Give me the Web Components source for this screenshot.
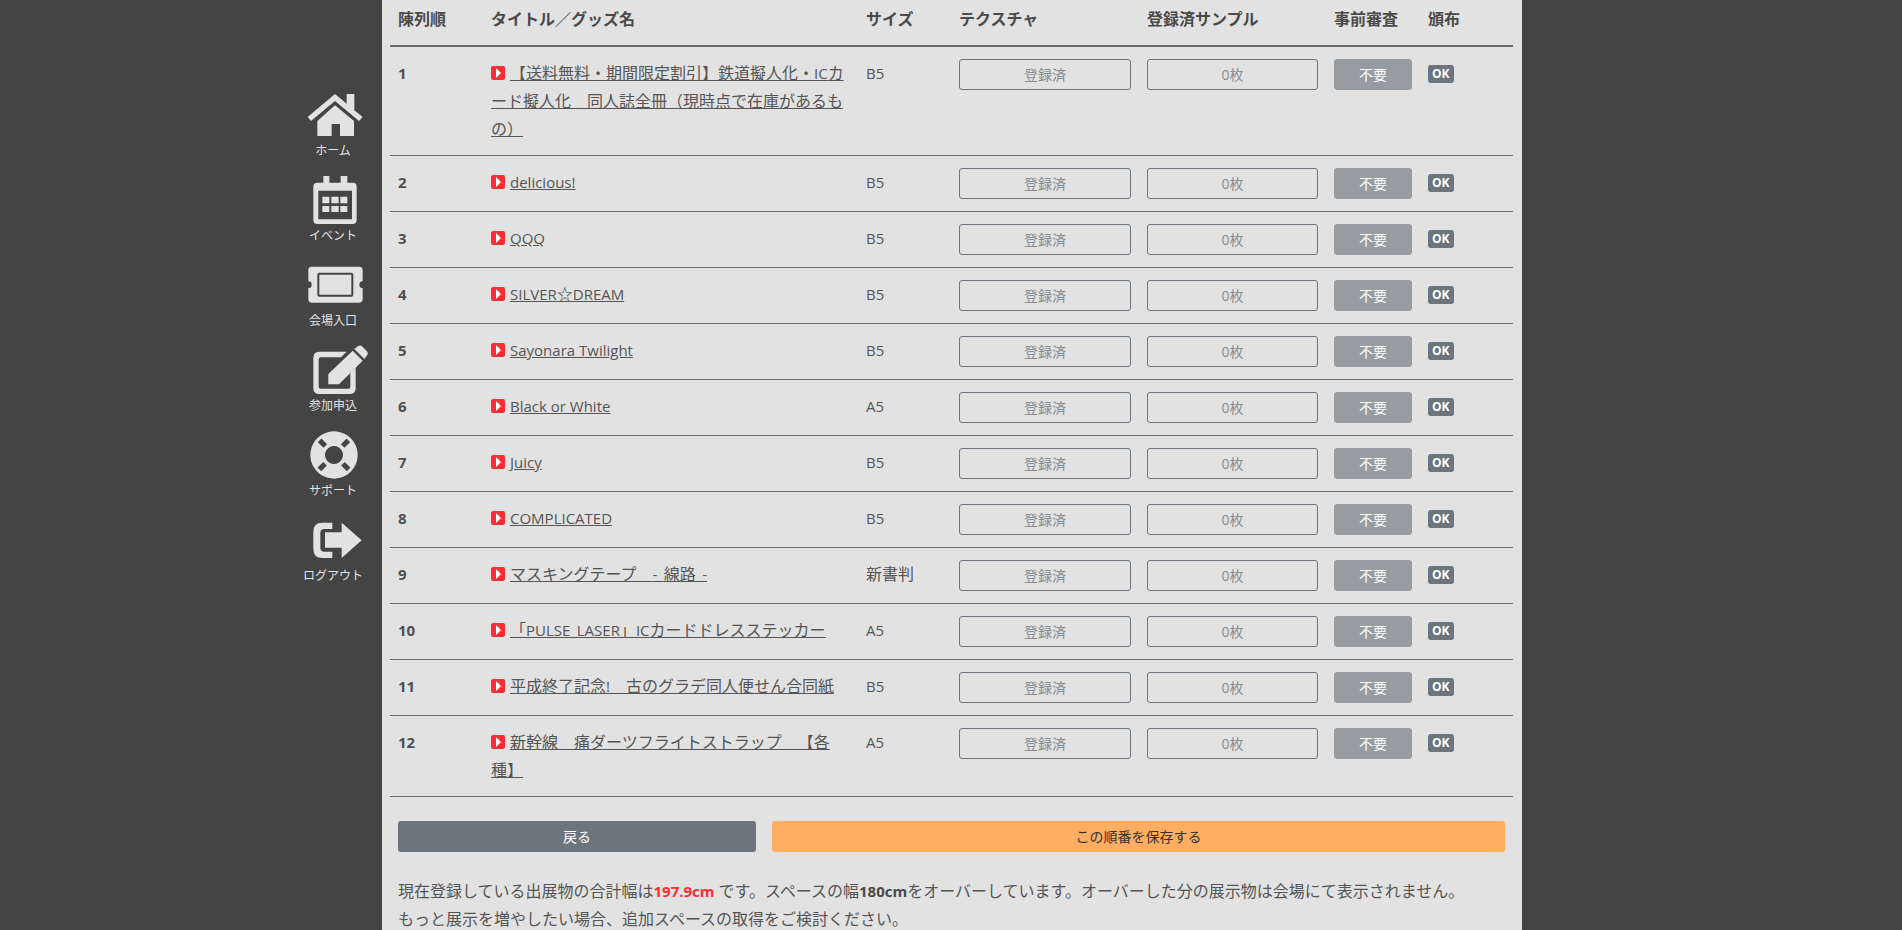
<!DOCTYPE html>
<html lang="ja">
<head>
<meta charset="utf-8">
<title>陳列順</title>
<style>
    html, body { margin: 0; height: 930px; overflow: hidden; background: #444; }
    body { font: 16px/28px "Open Sans", "Noto Sans CJK JP", sans-serif; color: #555; text-spacing-trim: space-all; }
    svg { fill: #e2e2e2; display: block; }
</style>
</head>
<body>
<shop-page>
    <side-nav slot="side">
        <nav-item>
            <svg viewBox="0 -21 276 207" width="92" height="69"><path d="M135 42l35 29V42h23v49l25 20-11 12-72-60-72 60-10-12z"/><path d="M135 76l57 47v45h-42v-36h-25v36H82v-45z"/></svg>
            <span slot="label">ホーム</span>
        </nav-item>
        <nav-item>
            <svg viewBox="0 234 276 207" width="92" height="69"><path fill-rule="evenodd" d="M100 288h18v20h34v-20h20v20h16q12 0 12 12v100q0 12-12 12H82q-12 0-12-12V320q0-12 12-12h18zM85 332v86h101v-86zM97 350h21v20H97zM124 350h22v20h-22zM151 350h21v20h-21zM97 378h21v18H97zM124 378h22v18h-22zM151 378h21v18h-21z"/></svg>
            <span slot="label">イベント</span>
        </nav-item>
        <nav-item>
            <svg viewBox="0 489 276 207" width="92" height="69"><path fill-rule="evenodd" d="M65 560H208q10 0 10 10v34a10 10 0 0 0 0 20v34q0 10-10 10H65q-10 0-10-10v-34a10 10 0 0 0 0-20v-34q0-10 10-10zM88 578q-6 0-6 6v60q0 6 6 6h96q6 0 6-6v-60q0-6-6-6zM88 584h96v60H88z"/></svg>
            <span slot="label">会場入口</span>
        </nav-item>
        <nav-item>
            <svg viewBox="0 -6 276 207" width="92" height="69"><path d="M88 65h82l-17 17H92q-6 0-6 6v82q0 6 6 6h83q6 0 6-6v-42l16-16v62q0 18-18 18H88q-18 0-18-18V83q0-18 18-18z"/><path d="M115 163v-31l73-70 30 30-71 71z"/><path d="M193 57l12-9q6-4 11 1l15 15q5 6 1 11l-9 12z"/></svg>
            <span slot="label">参加申込</span>
        </nav-item>
        <nav-item>
            <svg viewBox="0 249 276 207" width="92" height="69"><path fill-rule="evenodd" d="M132 304a71 71 0 1 0 .01 0zM132 348a27 27 0 1 1-.01 0z"/><g fill="#444"><rect x="85" y="332" width="24" height="15" transform="rotate(45 97 340)"/><rect x="155" y="332" width="24" height="15" transform="rotate(-45 167 340)"/><rect x="85" y="402" width="24" height="15" transform="rotate(-45 97 410)"/><rect x="155" y="402" width="24" height="15" transform="rotate(45 167 410)"/></g></svg>
            <span slot="label">サポート</span>
        </nav-item>
        <nav-item>
            <svg viewBox="0 504 276 207" width="92" height="69"><path d="M127 578H97q-27 0-27 27v52q0 27 27 27h30v-19h-24q-12 0-12-12v-44q0-12 12-12h24z"/><path d="M155 578l60 53-60 53v-31h-50v-46h50z"/></svg>
            <span slot="label">ログアウト</span>
        </nav-item>
    </side-nav>

    <list-head></list-head>
    <exhibit-row no="1" size="B5">【送料無料・期間限定割引】鉄道擬人化・<span class="lat">IC</span>カード擬人化　同人誌全冊（現時点で在庫があるもの）</exhibit-row>
    <exhibit-row no="2" size="B5"><span class="lat">delicious!</span></exhibit-row>
    <exhibit-row no="3" size="B5"><span class="lat">QQQ</span></exhibit-row>
    <exhibit-row no="4" size="B5"><span class="lat">SILVER</span>☆<span class="lat">DREAM</span></exhibit-row>
    <exhibit-row no="5" size="B5"><span class="lat">Sayonara Twilight</span></exhibit-row>
    <exhibit-row no="6" size="A5"><span class="lat">Black or White</span></exhibit-row>
    <exhibit-row no="7" size="B5"><span class="lat">Juicy</span></exhibit-row>
    <exhibit-row no="8" size="B5"><span class="lat">COMPLICATED</span></exhibit-row>
    <exhibit-row no="9" size="新書判">マスキングテープ　<span class="lat sp">- </span>線路<span class="lat sp"> -</span></exhibit-row>
    <exhibit-row no="10" size="A5">「<span class="lat sp">PULSE LASER</span>」<span class="lat">IC</span>カードドレスステッカー</exhibit-row>
    <exhibit-row no="11" size="B5">平成終了記念<span class="lat">!</span>　古のグラデ同人便せん合同紙</exhibit-row>
    <exhibit-row no="12" size="A5">新幹線　痛ダーツフライトストラップ　【各種】</exhibit-row>

    <form-actions></form-actions>
    <over-note>
        現在登録している出展物の合計幅は<b class="red">197.9cm</b>です。スペースの幅<b>180cm</b>をオーバーしています。オーバーした分の展示物は会場にて表示されません。<br>
        もっと展示を増やしたい場合、追加スペースの取得をご検討ください。
    </over-note>
</shop-page>

<script>
const gridCols = '93px 375px 93px 188px 187px 94px 93px';

class ShopPage extends HTMLElement {
    constructor() {
        super();
        this.attachShadow({ mode: 'open' });
        this.shadowRoot.innerHTML = `
            <style>
                :host { display: flex; padding-left: 290px; height: 930px; overflow: hidden; }
                .side { width: 92px; flex: none; }
                .panel { width: 1123px; padding: 0 9px 0 8px; background: #e2e2e2; flex: none; }
            </style>
            <div class="side"><slot name="side"></slot></div>
            <main class="panel"><slot></slot></main>
        `;
    }
}

class SideNav extends HTMLElement {
    constructor() {
        super();
        this.attachShadow({ mode: 'open' });
        this.shadowRoot.innerHTML = `
            <style>
                :host { display: block; padding-top: 73px; }
            </style>
            <slot></slot>
        `;
    }
}

class NavItem extends HTMLElement {
    constructor() {
        super();
        this.attachShadow({ mode: 'open' });
        this.shadowRoot.innerHTML = `
            <style>
                :host { display: block; height: 85px; }
                .label {
                    display: block; padding: 1px 6px 0 0; text-align: center;
                    font-size: 12px; line-height: 16px; color: #e2e2e2;
                }
            </style>
            <slot></slot>
            <div class="label"><slot name="label"></slot></div>
        `;
    }
}

class ListHead extends HTMLElement {
    constructor() {
        super();
        this.attachShadow({ mode: 'open' });
        const names = ['陳列順', 'タイトル／グッズ名', 'サイズ', 'テクスチャ', '登録済サンプル', '事前審査', '頒布'];
        this.shadowRoot.innerHTML = `
            <style>
                :host {
                    display: grid; grid-template-columns: ${gridCols};
                    border-bottom: 2px solid #6c6c6c; font-weight: 700; color: #4a4a4a;
                }
                div { padding: 5px 8px 12px; white-space: nowrap; }
            </style>
            ${names.map(n => `<div>${n}</div>`).join('')}
        `;
    }
}

class ExhibitRow extends HTMLElement {
    constructor() {
        super();
        this.attachShadow({ mode: 'open' });
    }

    connectedCallback() {
        const no = this.getAttribute('no');
        const size = this.getAttribute('size');
        this.shadowRoot.innerHTML = `
            <style>
                :host {
                    display: grid; grid-template-columns: ${gridCols};
                    border-bottom: 1px solid #6c6c6c;
                }
                .cell { padding: 12px 8px; min-width: 0; }
                .no { font-weight: 700; font-size: 15px; color: #4f4f4f; }
                .size { font-size: ${/^[A-Z]/.test(size) ? '15px' : '16px'}; }
                a { color: #555; text-decoration: underline; }
                .mark {
                    display: inline-block; width: 14px; height: 14px; margin-right: 5px;
                    vertical-align: -1px; background: #ff2d33; border-radius: 2px; position: relative;
                }
                .mark::after {
                    content: ''; position: absolute; left: 5px; top: 2px;
                    border-left: 5px solid #fff; border-top: 5px solid transparent; border-bottom: 5px solid transparent;
                }
                ::slotted(.lat) { font-size: 15px; line-height: 1; }
                ::slotted(.sp) { word-spacing: 2.5px; }
                .btn {
                    display: block; box-sizing: border-box; height: 31px; border-radius: 3px;
                    font-size: 14px; line-height: 29px; text-align: center;
                    border: 1px solid #6c757d; color: #888d92;
                }
                .fill { background: #979ca1; border-color: #979ca1; color: #fff; }
                .badge {
                    display: inline-block; margin-top: 6px; padding: 0 4px; height: 18px; border-radius: 3px;
                    background: #6c757d; color: #fff; font-size: 12px; font-weight: 700; line-height: 18px;
                    vertical-align: top;
                }
            </style>
            <div class="cell no">${no}</div>
            <div class="cell"><span class="mark"></span><a href="#"><slot></slot></a></div>
            <div class="cell size">${size}</div>
            <div class="cell"><span class="btn">登録済</span></div>
            <div class="cell"><span class="btn">0枚</span></div>
            <div class="cell"><span class="btn fill">不要</span></div>
            <div class="cell"><span class="badge">OK</span></div>
        `;
    }
}

class FormActions extends HTMLElement {
    constructor() {
        super();
        this.attachShadow({ mode: 'open' });
        this.shadowRoot.innerHTML = `
            <style>
                :host {
                    display: grid; grid-template-columns: 358px 733px; gap: 16px;
                    padding: 24px 8px 25px; font-size: 14px;
                }
                div { height: 31px; line-height: 31px; text-align: center; border-radius: 3px; }
                .back { background: #6c757d; color: #fff; }
                .save { background: #ffad60; color: #333; }
            </style>
            <div class="back">戻る</div>
            <div class="save">この順番を保存する</div>
        `;
    }
}

class OverNote extends HTMLElement {
    constructor() {
        super();
        this.attachShadow({ mode: 'open' });
        this.shadowRoot.innerHTML = `
            <style>
                :host { display: block; padding: 0 8px; white-space: nowrap; }
                ::slotted(b) { font-size: 15px; line-height: 1; color: #4a4a4a; }
                ::slotted(b.red) { color: #ff2d33; margin-right: 4px; }
            </style>
            <slot></slot>
        `;
    }
}

customElements.define('shop-page', ShopPage);
customElements.define('side-nav', SideNav);
customElements.define('nav-item', NavItem);
customElements.define('list-head', ListHead);
customElements.define('exhibit-row', ExhibitRow);
customElements.define('form-actions', FormActions);
customElements.define('over-note', OverNote);
</script>
</body>
</html>
